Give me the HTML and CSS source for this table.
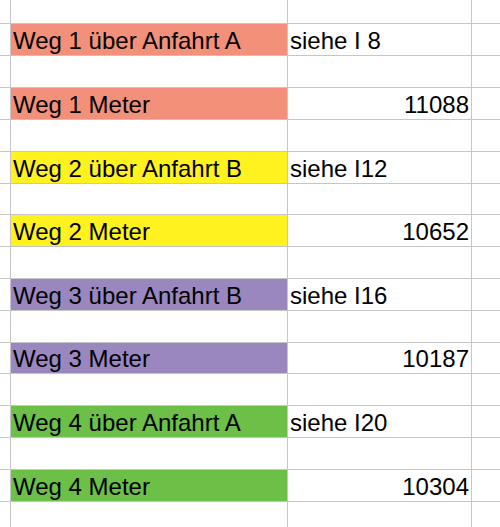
FILE: index.html
```html
<!DOCTYPE html>
<html lang="de">
<head>
<meta charset="utf-8">
<title>Tabelle</title>
<link rel="stylesheet" href="styles.css">
</head>
<body>
<div class="sheet">
  <div class="c"></div><div class="c"></div><div class="c"></div><div class="c"></div>

  <div class="c"></div><div class="c red">Weg 1 über Anfahrt A</div><div class="c">siehe I 8</div><div class="c"></div>
  <div class="c"></div><div class="c"></div><div class="c"></div><div class="c"></div>
  <div class="c"></div><div class="c red">Weg 1 Meter</div><div class="c num">11088</div><div class="c"></div>
  <div class="c"></div><div class="c"></div><div class="c"></div><div class="c"></div>

  <div class="c"></div><div class="c yellow">Weg 2 über Anfahrt B</div><div class="c">siehe I12</div><div class="c"></div>
  <div class="c"></div><div class="c"></div><div class="c"></div><div class="c"></div>
  <div class="c"></div><div class="c yellow">Weg 2 Meter</div><div class="c num">10652</div><div class="c"></div>
  <div class="c"></div><div class="c"></div><div class="c"></div><div class="c"></div>

  <div class="c"></div><div class="c purple">Weg 3 über Anfahrt B</div><div class="c">siehe I16</div><div class="c"></div>
  <div class="c"></div><div class="c"></div><div class="c"></div><div class="c"></div>
  <div class="c"></div><div class="c purple">Weg 3 Meter</div><div class="c num">10187</div><div class="c"></div>
  <div class="c"></div><div class="c"></div><div class="c"></div><div class="c"></div>

  <div class="c"></div><div class="c green">Weg 4 über Anfahrt A</div><div class="c">siehe I20</div><div class="c"></div>
  <div class="c"></div><div class="c"></div><div class="c"></div><div class="c"></div>
  <div class="c"></div><div class="c green">Weg 4 Meter</div><div class="c num">10304</div><div class="c"></div>
  <div class="c"></div><div class="c"></div><div class="c"></div><div class="c"></div>
</div>
</body>
</html>
```

FILE: styles.css
```css
html, body {
  margin: 0;
  padding: 0;
  background: #ffffff;
}

body {
  width: 500px;
  height: 527px;
  overflow: hidden;
}

.sheet {
  display: grid;
  grid-template-columns: 10px 276px 183px 28px;
  grid-template-rows: 23px 31px 31px 31px 31px 31px 30px 31px 31px 31px 31px 30px 31px 31px 31px 31px 25px;
  gap: 1px;
  background: #c6c6c6;
  width: 500px;
  height: 527px;
  font-family: "Liberation Sans", Arial, sans-serif;
  font-size: 24px;
  color: #000000;
}

.c {
  background: #ffffff;
  display: flex;
  align-items: flex-end;
  padding: 0 2px 1px;
  line-height: 27px;
  white-space: nowrap;
  overflow: hidden;
}

.num {
  justify-content: flex-end;
  padding-right: 2px;
}

.red {
  background: #f39079;
}

.yellow {
  background: #fff21f;
}

.purple {
  background: #9b87c0;
}

.green {
  background: #6cbf47;
}
```
